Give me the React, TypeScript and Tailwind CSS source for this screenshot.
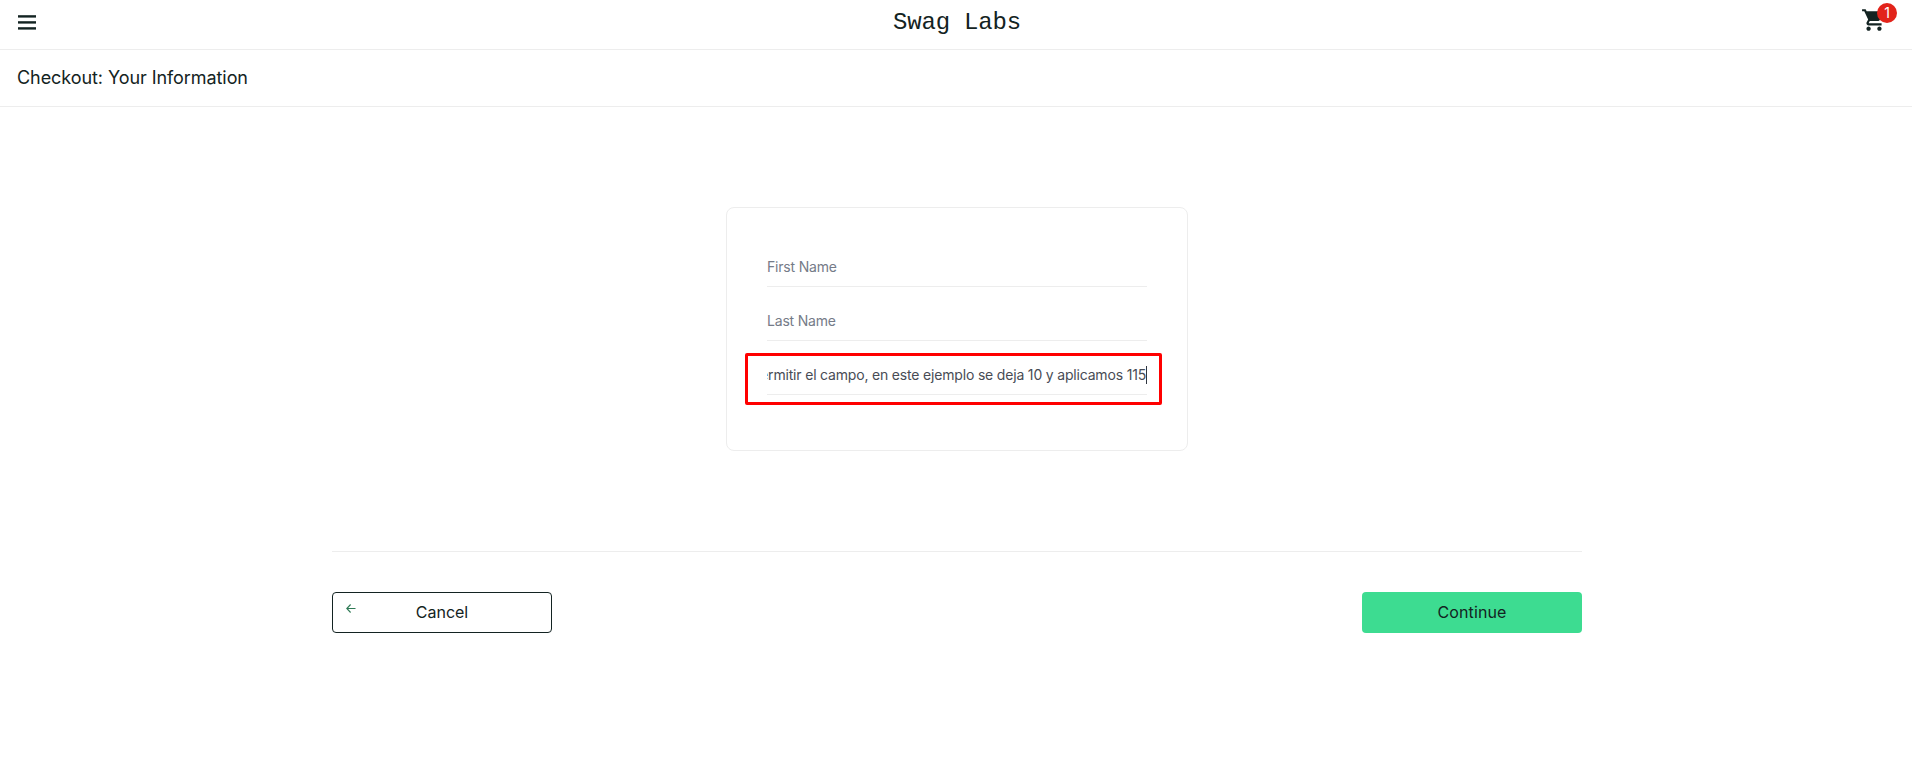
import React from "react";
import { MdShoppingCart } from "react-icons/md";

function Header() {
  return (
    <header className="grid h-[50px] grid-cols-3 border-b border-[#ededed]">
      <div className="pl-[18px] pt-[15px]">
        <svg width="18" height="15" viewBox="0 0 18 15" fill="#132322" aria-label="Open Menu">
          <rect y="0.2" width="18" height="2.4" />
          <rect y="6.2" width="18" height="2.4" />
          <rect y="12.2" width="18" height="2.4" />
        </svg>
      </div>
      <div className="whitespace-pre pl-[2px] pt-[7px] text-center font-['Liberation_Mono',monospace] text-2xl leading-8 tracking-[-0.2px]">
        Swag Labs
      </div>
      <div className="flex justify-end pr-[25px] pt-[7px]">
        <div className="relative h-[26px] w-[26px]">
          <MdShoppingCart size={26} />
          <span className="absolute left-4 top-[-4px] flex h-5 w-5 items-center justify-center rounded-full bg-[#e2231a] text-sm text-white">
            1
          </span>
        </div>
      </div>
    </header>
  );
}

function Field({ children }: { children: React.ReactNode }) {
  return (
    <div className="flex h-[39px] items-center overflow-hidden whitespace-nowrap border-b border-[#ededed] text-sm text-[#757b88]">
      {children}
    </div>
  );
}

export default function App() {
  return (
    <div className="h-[780px] overflow-hidden bg-white font-['Inter',sans-serif] text-[#132322]">
      <Header />
      <div className="flex h-[57px] items-center border-b border-[#ededed] pl-[17px] text-lg">
        <span className="tracking-[-0.07px]">Checkout: Your Information</span>
      </div>
      <main className="ml-[332px] w-[1250px] pt-[100px]">
        <form className="relative mx-auto flex h-[244px] w-[462px] flex-col gap-[15px] rounded-lg border border-[#ededed] px-10 pt-10">
          <Field>
            <span className="tracking-[-0.2px]">First Name</span>
          </Field>
          <Field>
            <span className="tracking-[-0.2px]">Last Name</span>
          </Field>
          <Field>
            <div className="flex w-full items-center justify-end text-[#484c55]">
              <span className="tracking-[-0.18px]">
                ermitir el campo, en este ejemplo se deja 10 y aplicamos 115
              </span>
              <span className="h-[18px] w-px shrink-0 bg-[#303640]" />
            </div>
          </Field>
          <div className="pointer-events-none absolute left-[18px] top-[145px] h-[52px] w-[417px] rounded-[2px] border-[3px] border-[#ff0000]" />
        </form>
        <div className="mt-[100px] flex justify-between border-t border-[#ededed] pt-10">
          <button
            type="button"
            className="relative h-[41px] w-[220px] rounded border border-[#132322] pb-0.5 text-base"
          >
            <svg
              className="absolute left-[13px] top-[11px]"
              width="10"
              height="10"
              viewBox="0 0 10 10"
              fill="none"
              stroke="#2f7a55"
              strokeWidth="1.1"
            >
              <path d="M9.5 4.5H.8M4.6.5.8 4.5l3.8 4" />
            </svg>
            Cancel
          </button>
          <button type="button" className="h-[41px] w-[220px] rounded bg-[#3ddc91] pb-0.5 text-base">
            <span className="tracking-[0.1px]">Continue</span>
          </button>
        </div>
      </main>
    </div>
  );
}
